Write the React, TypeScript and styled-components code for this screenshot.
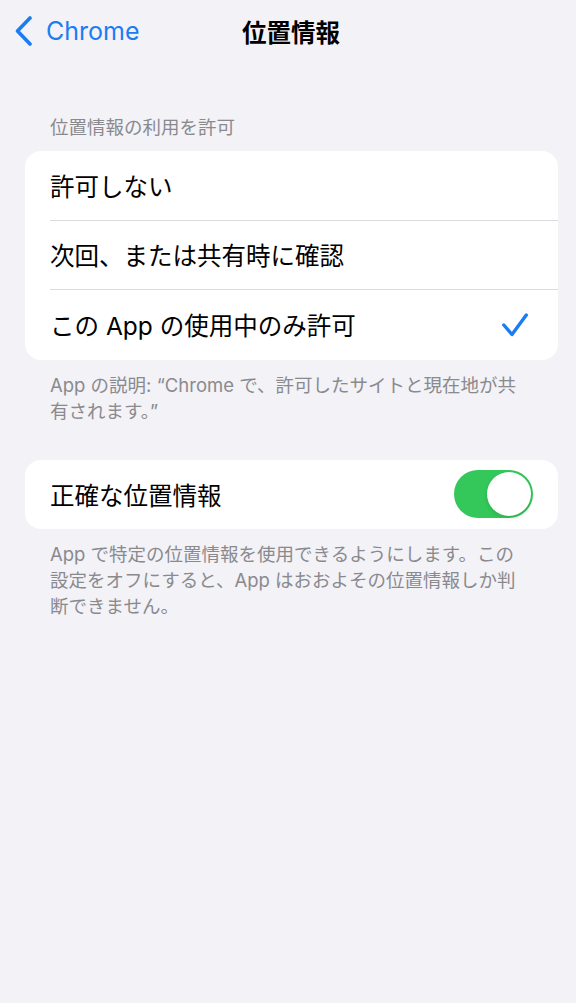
import React from "react";
import styled, { createGlobalStyle } from "styled-components";

const Global = createGlobalStyle`
  html, body { margin: 0; padding: 0; background: #f2f2f7; }
  body {
    font-family: "Inter", "Noto Sans CJK JP", sans-serif;
    -webkit-font-smoothing: antialiased;
  }
`;

const Page = styled.div`
  width: 576px;
  min-height: 1003px;
  background: #f2f2f7;
  display: flex;
  flex-direction: column;
  box-sizing: border-box;
`;

const NavBar = styled.div`
  height: 62px;
  display: grid;
  grid-template-columns: 1fr auto 1fr;
  align-items: center;
`;

const BackButton = styled.div`
  display: flex;
  align-items: center;
  gap: 13px;
  padding-left: 15px;
  color: #1c7cf2;
  font-size: 25px;
`;

const Title = styled.div`
  padding-left: 6px;
  font-size: 24.5px;
  font-weight: 700;
  color: #000;
  font-family: "Noto Sans CJK JP", sans-serif;
`;

const Content = styled.div`
  padding: 52px 18px 0 25px;
  display: flex;
  flex-direction: column;
`;

const SectionHeader = styled.div`
  padding-left: 25px;
  font-size: 18.5px;
  line-height: 26px;
  color: #8a8a8e;
  margin-bottom: 11px;
`;

const Card = styled.div`
  background: #fff;
  border-radius: 16px;
  overflow: hidden;
  display: flex;
  flex-direction: column;
`;

const Row = styled.div<{ $divider?: boolean }>`
  height: 69.5px;
  display: flex;
  align-items: center;
  justify-content: space-between;
  margin-left: 25px;
  padding-right: 25px;
  box-sizing: border-box;
  font-size: 24.5px;
  color: #000;
  border-bottom: ${(p) => (p.$divider ? "1px solid #dcdce0" : "none")};
`;

const Footer = styled.div<{ $gapAfter?: number }>`
  padding: 12px 25px 0 25px;
  font-size: 18.5px;
  line-height: 26px;
  color: #8a8a8e;
  margin-bottom: ${(p) => p.$gapAfter ?? 0}px;
`;

const Toggle = styled.div<{ $on: boolean }>`
  width: 79px;
  height: 48px;
  border-radius: 24px;
  background: ${(p) => (p.$on ? "#34c759" : "#e9e9eb")};
  position: relative;
  flex-shrink: 0;
`;

const Knob = styled.div<{ $on: boolean }>`
  position: absolute;
  top: 2px;
  left: ${(p) => (p.$on ? "33px" : "2px")};
  width: 44px;
  height: 44px;
  border-radius: 50%;
  background: #fff;
  box-shadow: 0 2px 4px rgba(0, 0, 0, 0.12);
`;

const CheckWrap = styled.span`
  display: flex;
  margin-right: 5px;
`;

const Chevron = () => (
  <svg width="18" height="30" viewBox="0 0 18 30" fill="none">
    <path
      d="M15 2 L2.5 15 L15 28"
      stroke="#1c7cf2"
      strokeWidth="3.6"
      strokeLinecap="round"
      strokeLinejoin="round"
    />
  </svg>
);

const Check = () => (
  <CheckWrap>
    <svg width="26" height="24" viewBox="0 0 26 24" fill="none">
      <path
        d="M1.8 12 L10 21.5 L24.3 2"
        stroke="#1c7cf2"
        strokeWidth="3.4"
        strokeLinecap="round"
        strokeLinejoin="round"
      />
    </svg>
  </CheckWrap>
);

export default function App() {
  return (
    <Page>
      <Global />
      <NavBar>
        <BackButton>
          <Chevron />
          <span>Chrome</span>
        </BackButton>
        <Title>位置情報</Title>
        <div />
      </NavBar>
      <Content>
        <SectionHeader>位置情報の利用を許可</SectionHeader>
        <Card>
          <Row $divider>許可しない</Row>
          <Row $divider>次回、または共有時に確認</Row>
          <Row>
            <span>この App の使用中のみ許可</span>
            <Check />
          </Row>
        </Card>
        <Footer $gapAfter={36}>
          App の説明: “Chrome で、許可したサイトと現在地が共
          <br />
          有されます。”
        </Footer>
        <Card>
          <Row>
            <span>正確な位置情報</span>
            <Toggle $on>
              <Knob $on />
            </Toggle>
          </Row>
        </Card>
        <Footer>
          App で特定の位置情報を使用できるようにします。この
          <br />
          設定をオフにすると、App はおおよその位置情報しか判
          <br />
          断できません。
        </Footer>
      </Content>
    </Page>
  );
}
